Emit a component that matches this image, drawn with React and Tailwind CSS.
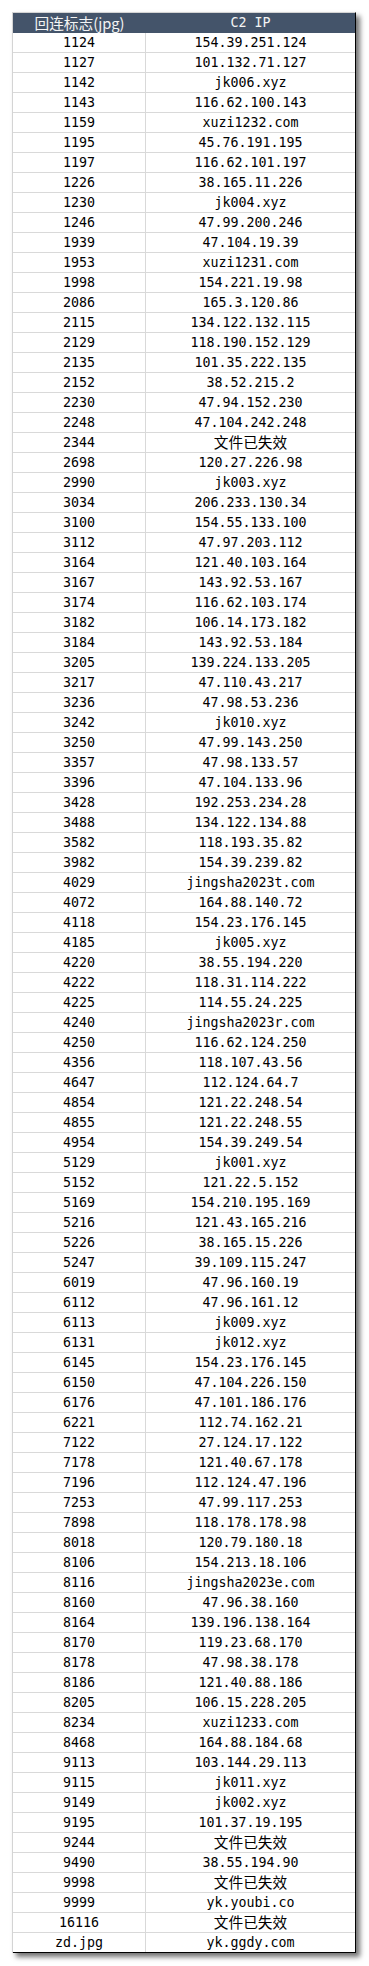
const rows = [
  ["1124", "154.39.251.124"],
  ["1127", "101.132.71.127"],
  ["1142", "jk006.xyz"],
  ["1143", "116.62.100.143"],
  ["1159", "xuzi1232.com"],
  ["1195", "45.76.191.195"],
  ["1197", "116.62.101.197"],
  ["1226", "38.165.11.226"],
  ["1230", "jk004.xyz"],
  ["1246", "47.99.200.246"],
  ["1939", "47.104.19.39"],
  ["1953", "xuzi1231.com"],
  ["1998", "154.221.19.98"],
  ["2086", "165.3.120.86"],
  ["2115", "134.122.132.115"],
  ["2129", "118.190.152.129"],
  ["2135", "101.35.222.135"],
  ["2152", "38.52.215.2"],
  ["2230", "47.94.152.230"],
  ["2248", "47.104.242.248"],
  ["2344", "文件已失效"],
  ["2698", "120.27.226.98"],
  ["2990", "jk003.xyz"],
  ["3034", "206.233.130.34"],
  ["3100", "154.55.133.100"],
  ["3112", "47.97.203.112"],
  ["3164", "121.40.103.164"],
  ["3167", "143.92.53.167"],
  ["3174", "116.62.103.174"],
  ["3182", "106.14.173.182"],
  ["3184", "143.92.53.184"],
  ["3205", "139.224.133.205"],
  ["3217", "47.110.43.217"],
  ["3236", "47.98.53.236"],
  ["3242", "jk010.xyz"],
  ["3250", "47.99.143.250"],
  ["3357", "47.98.133.57"],
  ["3396", "47.104.133.96"],
  ["3428", "192.253.234.28"],
  ["3488", "134.122.134.88"],
  ["3582", "118.193.35.82"],
  ["3982", "154.39.239.82"],
  ["4029", "jingsha2023t.com"],
  ["4072", "164.88.140.72"],
  ["4118", "154.23.176.145"],
  ["4185", "jk005.xyz"],
  ["4220", "38.55.194.220"],
  ["4222", "118.31.114.222"],
  ["4225", "114.55.24.225"],
  ["4240", "jingsha2023r.com"],
  ["4250", "116.62.124.250"],
  ["4356", "118.107.43.56"],
  ["4647", "112.124.64.7"],
  ["4854", "121.22.248.54"],
  ["4855", "121.22.248.55"],
  ["4954", "154.39.249.54"],
  ["5129", "jk001.xyz"],
  ["5152", "121.22.5.152"],
  ["5169", "154.210.195.169"],
  ["5216", "121.43.165.216"],
  ["5226", "38.165.15.226"],
  ["5247", "39.109.115.247"],
  ["6019", "47.96.160.19"],
  ["6112", "47.96.161.12"],
  ["6113", "jk009.xyz"],
  ["6131", "jk012.xyz"],
  ["6145", "154.23.176.145"],
  ["6150", "47.104.226.150"],
  ["6176", "47.101.186.176"],
  ["6221", "112.74.162.21"],
  ["7122", "27.124.17.122"],
  ["7178", "121.40.67.178"],
  ["7196", "112.124.47.196"],
  ["7253", "47.99.117.253"],
  ["7898", "118.178.178.98"],
  ["8018", "120.79.180.18"],
  ["8106", "154.213.18.106"],
  ["8116", "jingsha2023e.com"],
  ["8160", "47.96.38.160"],
  ["8164", "139.196.138.164"],
  ["8170", "119.23.68.170"],
  ["8178", "47.98.38.178"],
  ["8186", "121.40.88.186"],
  ["8205", "106.15.228.205"],
  ["8234", "xuzi1233.com"],
  ["8468", "164.88.184.68"],
  ["9113", "103.144.29.113"],
  ["9115", "jk011.xyz"],
  ["9149", "jk002.xyz"],
  ["9195", "101.37.19.195"],
  ["9244", "文件已失效"],
  ["9490", "38.55.194.90"],
  ["9998", "文件已失效"],
  ["9999", "yk.youbi.co"],
  ["16116", "文件已失效"],
  ["zd.jpg", "yk.ggdy.com"],
];

const mono = "font-['DejaVu_Sans_Mono',monospace] text-[13.3px]";
const cjk = "font-['Noto_Sans_CJK_SC',sans-serif] text-[14.7px]";

function Cell({ text, className = "" }) {
  const isCjk = /[\u4e00-\u9fff]/.test(text);
  return (
    <div
      className={`flex items-center justify-center leading-none text-black ${
        isCjk ? cjk : mono
      } ${className}`}
    >
      {text}
    </div>
  );
}

export default function App() {
  return (
    <div className="w-[369px] h-[1966px] bg-white pt-[12px] pl-[12px]">
      <div className="w-[344px] border-l border-t border-[#d4d4d4] border-r-[1px] border-r-black shadow-[4px_4px_5px_rgba(0,0,0,0.55)]">
        <div className="grid grid-cols-[133px_1fr] h-[20px] bg-[#44546a] text-[#f4f4f4]">
          <div className="flex items-center justify-center leading-none font-['Noto_Sans_CJK_SC',sans-serif] text-[14.7px]">
            回连标志(jpg)
          </div>
          <div className="flex items-center justify-center leading-none font-['DejaVu_Sans_Mono',monospace] text-[13.3px]">
            C2 IP
          </div>
        </div>
        {rows.map(([a, b], i) => (
          <div
            key={i}
            className={`grid grid-cols-[133px_1fr] h-[20px] border-b ${
              i === rows.length - 1 ? "border-black" : "border-[#d9d9d9]"
            }`}
          >
            <Cell text={a} className="border-r border-[#d9d9d9]" />
            <Cell text={b} />
          </div>
        ))}
      </div>
    </div>
  );
}
